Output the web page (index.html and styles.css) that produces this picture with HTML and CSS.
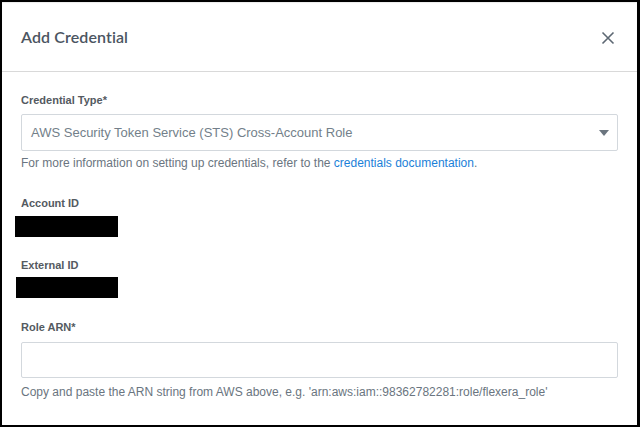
FILE: index.html
```html
<!DOCTYPE html>
<html>
<head>
<meta charset="utf-8">
<link rel="stylesheet" href="styles.css">
</head>
<body>
<div class="modal">
  <div class="modal-header">
    <h1 class="title">Add Credential</h1>
    <button class="close" aria-label="Close">
      <svg width="14" height="14" viewBox="0 0 14 14"><path d="M1.5 1.5 L12.5 12.5 M12.5 1.5 L1.5 12.5" stroke="#5d6873" stroke-width="1.6" fill="none"/></svg>
    </button>
  </div>
  <div class="modal-body">
    <div class="label first">Credential Type*</div>
    <div class="select">
      <span class="select-text">AWS Security Token Service (STS) Cross-Account Role</span>
      <span class="caret"></span>
    </div>
    <div class="help">For more information on setting up credentials, refer to the <a class="link" href="#">credentials documentation</a>.</div>

    <div class="label account">Account ID</div>
    <div class="redact r1"></div>

    <div class="label external">External ID</div>
    <div class="redact r2"></div>

    <div class="label role">Role ARN*</div>
    <div class="input"></div>
    <div class="help help2">Copy and paste the ARN string from AWS above, e.g. 'arn:aws:iam::98362782281:role/flexera_role'</div>
  </div>
</div>
</body>
</html>
```
FILE: styles.css
```css
* { box-sizing: border-box; }
html, body { margin: 0; padding: 0; background: #000; }
body { width: 640px; height: 427px; overflow: hidden; }

.modal {
  width: 640px;
  height: 427px;
  background: #fff;
  border-style: solid;
  border-color: #000;
  border-width: 2px 3px 2px 2px;
  display: flex;
  flex-direction: column;
  font-family: "Liberation Sans", Arial, sans-serif;
}

.modal-header {
  height: 70px;
  flex: 0 0 70px;
  border-bottom: 1px solid #d9d9d9;
  display: flex;
  align-items: center;
  justify-content: space-between;
  padding: 0 22px 0 19px;
  box-shadow: inset 0 1px 1px rgba(0,0,0,0.08);
}

.title {
  margin: 0;
  font-family: Lato, "Open Sans", sans-serif;
  font-weight: 600;
  font-size: 16px;
  color: #4b5561;
  letter-spacing: 0.1px;
}

.close {
  border: 0;
  background: none;
  padding: 0;
  width: 14px;
  height: 14px;
  display: flex;
  margin-top: 3px;
}

.modal-body {
  padding: 22px 19px 0 19px;
  display: flex;
  flex-direction: column;
}

.label {
  font-size: 11px;
  line-height: 13px;
  font-weight: bold;
  color: #545a61;
}
.account { margin-top: 27px; }
.external { margin-top: 22px; }
.role { margin-top: 23px; }

.select {
  margin-top: 7px;
  height: 37px;
  border: 1px solid #d3d8dd;
  border-radius: 2px;
  display: flex;
  align-items: center;
  justify-content: space-between;
  padding: 0 8px 0 9px;
}
.select-text {
  font-size: 13px;
  color: #737f8a;
}
.caret {
  width: 0;
  height: 0;
  border-left: 5px solid transparent;
  border-right: 5px solid transparent;
  border-top: 6px solid #6b757f;
}

.help {
  margin-top: 5px;
  font-size: 12px;
  line-height: 14px;
  color: #6a7580;
}
.help2 { margin-top: 7px; }
.link { color: #1b7fd8; text-decoration: none; }

.redact {
  background: #000;
  height: 21px;
}
.r1 { margin: 6px 0 0 -6px; width: 103px; }
.r2 { margin: 5px 0 0 -5px; width: 102px; }

.input {
  margin-top: 8px;
  height: 36px;
  border: 1px solid #d3d8dd;
  border-radius: 2px;
}
```
